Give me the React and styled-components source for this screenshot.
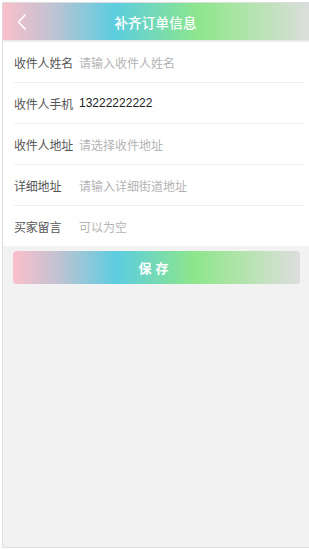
import React from "react";
import styled, { createGlobalStyle } from "styled-components";

const GlobalStyle = createGlobalStyle`
  html, body {
    margin: 0;
    padding: 0;
    background: #ffffff;
    overflow: hidden;
  }
  body {
    font-family: "Noto Sans CJK SC", "Liberation Sans", sans-serif;
  }
  #root {
    padding: 2px 0 0 2px;
  }
`;

const rainbow = `linear-gradient(90deg, #fbbfca 0%, #c4c2d2 15%, #5ccde0 36%, #8de68c 63%, #aee4a8 78%, #dddddd 100%)`;

const Frame = styled.div`
  width: 309px;
  height: 544px;
  border: 1px solid #dedede;
  border-right: none;
  background: #f2f2f2;
  display: flex;
  flex-direction: column;
`;

const Header = styled.div`
  height: 37px;
  background: ${rainbow};
  display: flex;
  align-items: center;
  justify-content: center;
  position: relative;
  box-shadow: 0 1px 2px rgba(0, 0, 0, 0.06);
`;

const Back = styled.button`
  position: absolute;
  left: 8px;
  top: 8px;
  width: 22px;
  height: 22px;
  padding: 0;
  border: none;
  background: transparent;
  display: flex;
  align-items: center;
  justify-content: center;
`;

const Title = styled.h1`
  margin: 0 4px 0 0;
  font-size: 13.5px;
  font-weight: 500;
  color: #ffffff;
  letter-spacing: 0.2px;
`;

const Form = styled.div`
  margin-top: 2px;
  background: #ffffff;
  display: flex;
  flex-direction: column;
`;

const Row = styled.div`
  height: 40px;
  margin: 0 8px 0 11px;
  display: flex;
  align-items: center;
  border-bottom: ${p => (p.last ? "none" : "1px solid #f0f0f0")};
`;

const Label = styled.span`
  width: 65px;
  flex-shrink: 0;
  font-size: 12px;
  letter-spacing: -0.2px;
  color: #555555;
`;

const Value = styled.span`
  font-size: 12px;
  color: ${p => (p.filled ? "#222222" : "#b4b4b4")};
  font-family: ${p =>
    p.filled
      ? `"Liberation Sans", "Noto Sans CJK SC", sans-serif`
      : `"Noto Sans CJK SC", sans-serif`};
`;

const Save = styled.button`
  margin: 5px 12px 0 10px;
  height: 33px;
  border: none;
  border-radius: 4px;
  background: ${rainbow};
  color: #ffffff;
  font-family: "Noto Sans CJK SC", sans-serif;
  font-size: 13px;
  font-weight: 700;
  letter-spacing: 4px;
  padding-left: 4px;
`;

const fields = [
  { label: "收件人姓名", value: "请输入收件人姓名" },
  { label: "收件人手机", value: "13222222222", filled: true },
  { label: "收件人地址", value: "请选择收件地址" },
  { label: "详细地址", value: "请输入详细街道地址" },
  { label: "买家留言", value: "可以为空" },
];

export default function App() {
  return (
    <>
      <GlobalStyle />
      <Frame>
        <Header>
          <Back>
            <svg width="12" height="18" viewBox="0 0 12 18">
              <path
                d="M9 2 L2.5 9 L9 16"
                fill="none"
                stroke="#ffffff"
                strokeWidth="1.6"
                strokeLinecap="round"
                strokeLinejoin="round"
              />
            </svg>
          </Back>
          <Title>补齐订单信息</Title>
        </Header>
        <Form>
          {fields.map((f, i) => (
            <Row key={f.label} last={i === fields.length - 1}>
              <Label>{f.label}</Label>
              <Value filled={f.filled}>{f.value}</Value>
            </Row>
          ))}
        </Form>
        <Save>保存</Save>
      </Frame>
    </>
  );
}
